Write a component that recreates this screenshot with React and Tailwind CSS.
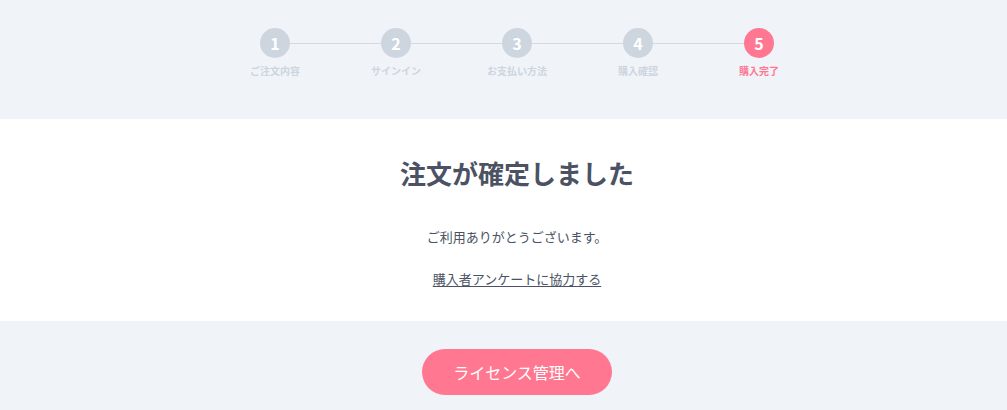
import React from "react";

const steps = ["ご注文内容", "サインイン", "お支払い方法", "購入確認", "購入完了"];

export default function App() {
  return (
    <div
      className="min-h-[410px] bg-[#f0f4f8]"
      style={{ fontFamily: '"Noto Sans CJK JP", "Noto Sans", sans-serif' }}
    >
      <div className="h-[119px] pt-[28px] flex justify-center pl-[27px]">
        <div className="relative flex">
          <div className="absolute left-[60px] right-[60px] top-[15px] h-px bg-[#d4d9e0]" />
          {steps.map((s, i) => {
            const active = i === 4;
            return (
              <div key={s} className="relative w-[121px] flex flex-col items-center">
                <div
                  className={
                    "w-[30px] h-[30px] rounded-full flex items-center justify-center text-white text-[16px] font-bold leading-none " +
                    (active ? "bg-[#ff7790]" : "bg-[#cdd5df]")
                  }
                >
                  {i + 1}
                </div>
                <div
                  className={
                    "mt-[6px] text-[10px] leading-[14px] font-bold " +
                    (active ? "text-[#ff7790]" : "text-[#cdd5df]")
                  }
                >
                  {s}
                </div>
              </div>
            );
          })}
        </div>
      </div>
      <div className="bg-white h-[202px] flex flex-col items-center pt-[36px] pl-[27px]">
        <h1 className="text-[26px] leading-[36px] font-bold text-[#4a5263]">注文が確定しました</h1>
        <p className="mt-[36px] text-[13px] leading-[20px] text-[#4a5263]">ご利用ありがとうございます。</p>
        <a href="#" className="mt-[22px] text-[13px] leading-[20px] text-[#4a5263] underline underline-offset-2">
          購入者アンケートに協力する
        </a>
      </div>
      <div className="flex justify-center pt-[28px] pb-[16px] pl-[27px]">
        <button className="w-[190px] h-[46px] rounded-full bg-[#ff7790] text-white text-[16px] leading-none">
          ライセンス管理へ
        </button>
      </div>
    </div>
  );
}
